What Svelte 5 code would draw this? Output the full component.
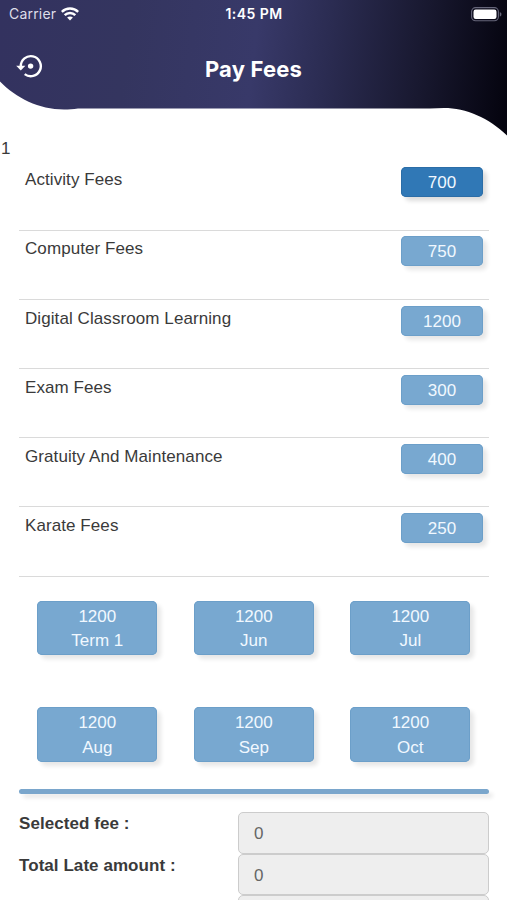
<script>
  const fees = [
    { name: 'Activity Fees', amount: 700, selected: true },
    { name: 'Computer Fees', amount: 750 },
    { name: 'Digital Classroom Learning', amount: 1200 },
    { name: 'Exam Fees', amount: 300 },
    { name: 'Gratuity And Maintenance', amount: 400 },
    { name: 'Karate Fees', amount: 250 }
  ];
  const terms = ['Term 1', 'Jun', 'Jul', 'Aug', 'Sep', 'Oct'];
  const totals = ['Selected fee :', 'Total Late amount :', ''];
</script>

<main class="screen">
  <header>
    <svg class="backdrop" width="507" height="137" viewBox="0 0 507 137" aria-hidden="true">
      <defs>
        <linearGradient id="night" gradientUnits="userSpaceOnUse" x1="0" y1="30" x2="507" y2="90">
          <stop offset="0" stop-color="#33325f" />
          <stop offset=".25" stop-color="#34355f" />
          <stop offset=".5" stop-color="#383969" />
          <stop offset=".64" stop-color="#2b2c52" />
          <stop offset=".83" stop-color="#18182f" />
          <stop offset="1" stop-color="#05040f" />
        </linearGradient>
      </defs>
      <path fill="url(#night)" d="M0 0H507V135.5C489 118 466 108 444 108L430 108.5H78C73 109.3 69 109.5 64 109.5C39 109.5 16 98 0 81.500Z" />
    </svg>
    <div class="status">
      <div class="carrier">
        <span>Carrier</span>
        <svg width="18" height="14" viewBox="0 0 18 14" fill="none" stroke="#fff" stroke-width="2.5">
          <path d="M.8 4.900C5.300.5 12.700.5 17.200 4.900" />
          <path d="M3.700 8.100C6.600 5.200 11.400 5.200 14.300 8.100" />
          <path d="M9 13.600L6.100 10.600C7.700 9.100 10.300 9.100 11.900 10.600Z" fill="#fff" stroke="none" />
        </svg>
      </div>
      <div class="time">1:45 PM</div>
      <svg class="battery" width="31" height="15" viewBox="0 0 31 15">
        <rect x=".6" y=".6" width="26.800" height="13.200" rx="4" fill="none" stroke="#66667a" stroke-width="1.100" />
        <rect x="2.500" y="2.500" width="23" height="9.400" rx="2.200" fill="#fff" />
        <path d="M28.800 4.900C31 5.800 31 8.600 28.800 9.500Z" fill="#66667a" />
      </svg>
    </div>
    <div class="nav">
      <svg class="history" width="27" height="25" viewBox="0 0 27 25">
        <path d="M4.800 12.300A10 10 0 1 1 8.700 20.100" fill="none" stroke="#fff" stroke-width="2.400" />
        <path d="M.2 11.700H9.400L4.800 16.500Z" fill="#fff" />
        <circle cx="14.600" cy="12.100" r="2.700" fill="#fff" />
      </svg>
      <h1>Pay Fees</h1>
    </div>
  </header>

  <div class="index">1</div>

  <section class="fees">
    {#each fees as fee}
      <div class="fee">
        <span class="name">{fee.name}</span>
        <button class="amount" class:selected={fee.selected}>{fee.amount}</button>
      </div>
    {/each}
  </section>

  <section class="terms">
    {#each terms as term}
      <button class="term"><span>1200</span><span>{term}</span></button>
    {/each}
  </section>

  <div class="bar"></div>

  <section class="totals">
    {#each totals as label}
      <div class="total">
        <span class="label">{label}</span>
        <div class="field">{label ? '0' : ''}</div>
      </div>
    {/each}
  </section>
</main>

<style>
  :global(body) { margin: 0; overflow: hidden; background: #fff; }
  .screen {
    width: 507px;
    height: 900px;
    overflow: hidden;
    background: #fff;
    color: #3a3a3a;
    font: 17px/24px "Liberation Sans", Arial, sans-serif;
  }
  header { position: relative; height: 137px; color: #fff; font-family: Inter, sans-serif; }
  .backdrop { position: absolute; inset: 0; }
  .status {
    position: relative;
    display: grid;
    grid-template-columns: 1fr auto 1fr;
    align-items: center;
    height: 27px;
    padding: 0 5px 0 9px;
    font-size: 14px;
    line-height: 28px;
  }
  .carrier { display: flex; align-items: center; gap: 5px; color: #dedee9; letter-spacing: .2px; }
  .time { margin-right: 3px; font-weight: 600; letter-spacing: .45px; }
  .battery { justify-self: end; }
  .nav {
    position: relative;
    display: grid;
    grid-template-columns: 1fr auto 1fr;
    height: 80px;
    padding: 0 16px;
  }
  .history { margin-top: 27px; }
  h1 { margin: 26px 0 0; font-size: 22px; line-height: 32px; font-weight: 700; letter-spacing: .2px; }
  .index { height: 30px; padding-left: 1px; box-sizing: border-box; }
  .fees { padding: 0 18px 0 19px; margin-top: -5.500px; }
  .fee {
    display: flex;
    justify-content: space-between;
    box-sizing: border-box;
    height: 69.200px;
    padding: 5.700px 6px 0;
    border-bottom: 1.500px solid #dadada;
  }
  .name { line-height: 26px; letter-spacing: .08px; }
  button { border: 0; padding: 0; font: inherit; color: #f1f8ff; background: #78a8d0; }
  .amount {
    width: 82px;
    height: 30px;
    padding-top: 2px;
    border-radius: 5px;
    box-shadow: inset 0 0 0 1px #6c9fc9, 4px 4px 4px #e7e7e7;
  }
  .amount.selected { background: #3078b6; box-shadow: inset 0 0 0 1px #2b6da7, 4px 4px 4px #ddd; }
  .terms {
    display: grid;
    grid-template-columns: repeat(3, 120px);
    column-gap: 36.500px;
    row-gap: 52px;
    padding: 24px 0 0 37.300px;
  }
  .term {
    display: flex;
    flex-direction: column;
    align-items: center;
    height: 54.500px;
    padding-top: 4px;
    border-radius: 5px;
    box-shadow: inset 0 0 0 1px #6c9fc9, 4px 4px 4px #e7e7e7;
    line-height: 24.500px;
  }
  .bar {
    height: 5px;
    margin: 27px 18px 0 19px;
    border-radius: 3px;
    background: #7aa6cc;
    box-shadow: 4px 4px 4px #e9e9e9;
  }
  .totals { padding: 18.600px 18px 0 19px; }
  .total { display: flex; justify-content: space-between; height: 41.600px; }
  .label { font-weight: 700; letter-spacing: .06px; }
  .field {
    box-sizing: border-box;
    width: 251px;
    height: 41.600px;
    padding-left: 15px;
    border: 1.500px solid #ccc;
    border-radius: 5px;
    background: #eee;
    color: #666;
    line-height: 41px;
  }
</style>
